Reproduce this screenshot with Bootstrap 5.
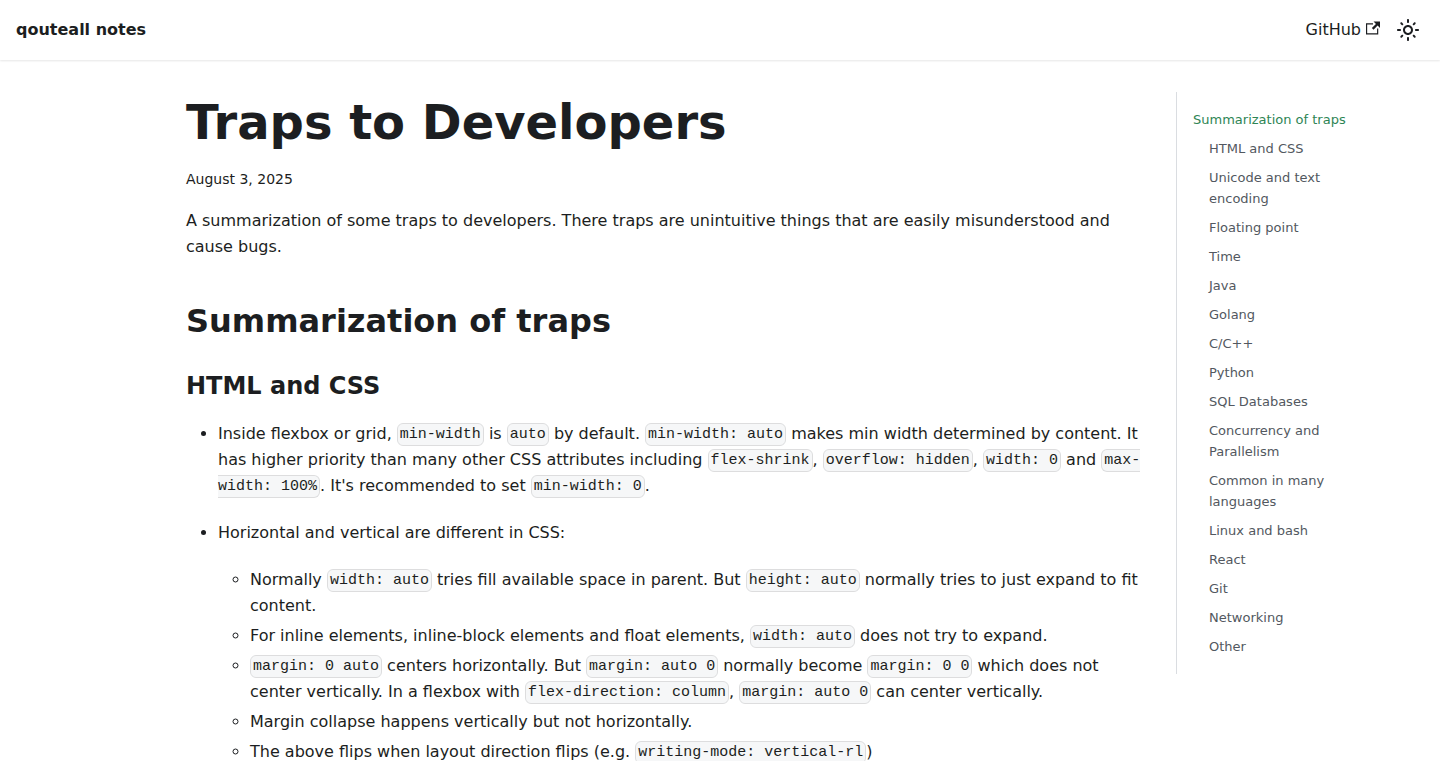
<!DOCTYPE html>
<html lang="en">
<head>
<meta charset="utf-8">
<meta name="viewport" content="width=device-width, initial-scale=1">
<title>Traps to Developers | qouteall notes</title>
<link href="https://cdn.jsdelivr.net/npm/bootstrap@5.3.0/dist/css/bootstrap.min.css" rel="stylesheet">
<style>
  :root {
    --ink: #1c1e21;
    --muted-ink: #525860;
    --accent: #2e8555;
    --rule: #dadde1;
  }
  body {
    font-family: "DejaVu Sans", sans-serif;
    font-size: 16px;
    line-height: 26px;
    color: var(--ink);
    background: #fff;
  }
  .site-bar {
    min-height: 60px;
    background: #fff;
    box-shadow: 0 1px 2px 0 rgba(0, 0, 0, .1);
  }
  .site-bar .navbar-brand,
  .site-bar .nav-link { color: var(--ink); font-size: 16px; }
  .site-bar .navbar-nav .nav-link { padding: 4px 12px; }
  .ext-icon { margin-left: 5px; vertical-align: baseline; }
  .theme-btn { width: 32px; height: 32px; color: var(--ink); }

  .page-grid, .page-grid > .row { --bs-gutter-x: 32px; }
  .post h1 { font-size: 48px; line-height: 60px; margin-bottom: 16px; }
  .post h2 { font-size: 32px; line-height: 40px; margin: 41px 0 30px; }
  .post h3 { font-size: 24px; line-height: 30px; margin-bottom: 20px; }
  .post-date { font-size: 14px; line-height: 22px; margin-bottom: 18px; }
  .post ul { padding-left: 32px; margin-bottom: 20px; }
  .post li > p { margin-bottom: 21px; }
  .post li li + li { margin-top: 4px; }
  .post code {
    font-family: "Liberation Mono", monospace;
    font-size: 15px;
    line-height: 24px;
    color: inherit;
    vertical-align: middle;
    padding: 2px;
    background: #f6f7f8;
    border: 1px solid rgba(0, 0, 0, .1);
    border-radius: 6px;
  }

  .contents {
    border-left: 1px solid var(--rule);
    padding: 17px 16px;
    font-size: 13px;
    line-height: 21px;
  }
  .contents li + li, .contents ul ul { margin-top: 8px; }
  .contents a { color: var(--muted-ink); text-decoration: none; }
  .contents a.active { color: var(--accent); }
</style>
</head>
<body>
<nav class="navbar navbar-expand sticky-top site-bar px-3 py-2" aria-label="Main">
  <a class="navbar-brand fw-bold p-0 m-0" href="#">qouteall notes</a>
  <div class="navbar-nav ms-auto align-items-center">
    <a class="nav-link" href="#">GitHub<svg class="ext-icon" width="14" height="14" viewBox="0 0 24 24" aria-hidden="true"><path fill="currentColor" d="M21 13v10h-21v-19h12v2h-10v15h17v-8h2zm3-12h-10.988l4.035 4-6.977 7.07 2.828 2.828 6.977-7.07 4.125 4.172v-11z"/></svg></a>
    <button class="btn border-0 rounded-circle p-0 d-flex align-items-center justify-content-center theme-btn" type="button" aria-label="Switch between dark and light mode">
      <svg width="24" height="24" viewBox="0 0 24 24" aria-hidden="true"><path fill="currentColor" d="M12,9c1.65,0,3,1.35,3,3s-1.35,3-3,3s-3-1.35-3-3S10.35,9,12,9 M12,7c-2.76,0-5,2.24-5,5s2.24,5,5,5s5-2.24,5-5 S14.76,7,12,7L12,7z M2,13l2,0c0.55,0,1-0.45,1-1s-0.45-1-1-1l-2,0c-0.55,0-1,0.45-1,1S1.45,13,2,13z M20,13l2,0c0.55,0,1-0.45,1-1 s-0.45-1-1-1l-2,0c-0.55,0-1,0.45-1,1S19.45,13,20,13z M11,2v2c0,0.55,0.45,1,1,1s1-0.45,1-1V2c0-0.55-0.45-1-1-1S11,1.45,11,2z M11,20v2c0,0.55,0.45,1,1,1s1-0.45,1-1v-2c0-0.55-0.45-1-1-1C11.45,19,11,19.45,11,20z M5.99,4.58c-0.39-0.39-1.03-0.39-1.41,0 c-0.39,0.39-0.39,1.03,0,1.41l1.06,1.06c0.39,0.39,1.03,0.39,1.41,0s0.39-1.03,0-1.41L5.99,4.58z M18.36,16.95 c-0.39-0.39-1.03-0.39-1.41,0c-0.39,0.39-0.39,1.03,0,1.41l1.06,1.06c0.39,0.39,1.03,0.39,1.41,0c0.39-0.39,0.39-1.03,0-1.41 L18.36,16.95z M19.42,5.99c0.39-0.39,0.39-1.03,0-1.41c-0.39-0.39-1.03-0.39-1.41,0l-1.06,1.06c-0.39,0.39-0.39,1.03,0,1.41 s1.03,0.39,1.41,0L19.42,5.99z M7.05,18.36c0.39-0.39,0.39-1.03,0-1.41c-0.39-0.39-1.03-0.39-1.41,0l-1.06,1.06 c-0.39,0.39-0.39,1.03,0,1.41s1.03,0.39,1.41,0L7.05,18.36z"/></svg>
    </button>
  </div>
</nav>

<div class="container-xxl page-grid">
  <div class="row">
    <main class="col-9 offset-1">
      <article class="post pt-4 mt-2">
        <h1 class="fw-bold">Traps to Developers</h1>
        <div class="post-date"><time datetime="2025-08-03">August 3, 2025</time></div>
        <p>A summarization of some traps to developers. There traps are unintuitive things that are easily misunderstood and cause bugs.</p>
        <h2 class="fw-bold" id="summary">Summarization of traps</h2>
        <h3 class="fw-bold" id="html-css">HTML and CSS</h3>
        <ul>
          <li>
            <p>Inside flexbox or grid, <code>min-width</code> is <code>auto</code> by default. <code>min-width: auto</code> makes min width determined by content. It has higher priority than many other CSS attributes including <code>flex-shrink</code>, <code>overflow: hidden</code>, <code>width: 0</code> and <code>max-width: 100%</code>. It's recommended to set <code>min-width: 0</code>.</p>
          </li>
          <li>
            <p>Horizontal and vertical are different in CSS:</p>
            <ul>
              <li>Normally <code>width: auto</code> tries fill available space in parent. But <code>height: auto</code> normally tries to just expand to fit content.</li>
              <li>For inline elements, inline-block elements and float elements, <code>width: auto</code> does not try to expand.</li>
              <li><code>margin: 0 auto</code> centers horizontally. But <code>margin: auto 0</code> normally become <code>margin: 0 0</code> which does not center vertically. In a flexbox with <code>flex-direction: column</code>, <code>margin: auto 0</code> can center vertically.</li>
              <li>Margin collapse happens vertically but not horizontally.</li>
              <li>The above flips when layout direction flips (e.g. <code>writing-mode: vertical-rl</code>)</li>
            </ul>
          </li>
        </ul>
      </article>
    </main>
    <aside class="col-2 pt-4 mt-2">
      <nav class="contents" aria-label="On this page">
        <ul class="list-unstyled mb-0">
          <li><a class="active" href="#summary">Summarization of traps</a>
            <ul class="list-unstyled ps-3">
              <li><a href="#html-css">HTML and CSS</a></li>
              <li><a href="#">Unicode and text encoding</a></li>
              <li><a href="#">Floating point</a></li>
              <li><a href="#">Time</a></li>
              <li><a href="#">Java</a></li>
              <li><a href="#">Golang</a></li>
              <li><a href="#">C/C++</a></li>
              <li><a href="#">Python</a></li>
              <li><a href="#">SQL Databases</a></li>
              <li><a href="#">Concurrency and Parallelism</a></li>
              <li><a href="#">Common in many languages</a></li>
              <li><a href="#">Linux and bash</a></li>
              <li><a href="#">React</a></li>
              <li><a href="#">Git</a></li>
              <li><a href="#">Networking</a></li>
              <li><a href="#">Other</a></li>
            </ul>
          </li>
        </ul>
      </nav>
    </aside>
  </div>
</div>
<script src="https://cdn.jsdelivr.net/npm/bootstrap@5.3.0/dist/js/bootstrap.bundle.min.js"></script>
</body>
</html>
